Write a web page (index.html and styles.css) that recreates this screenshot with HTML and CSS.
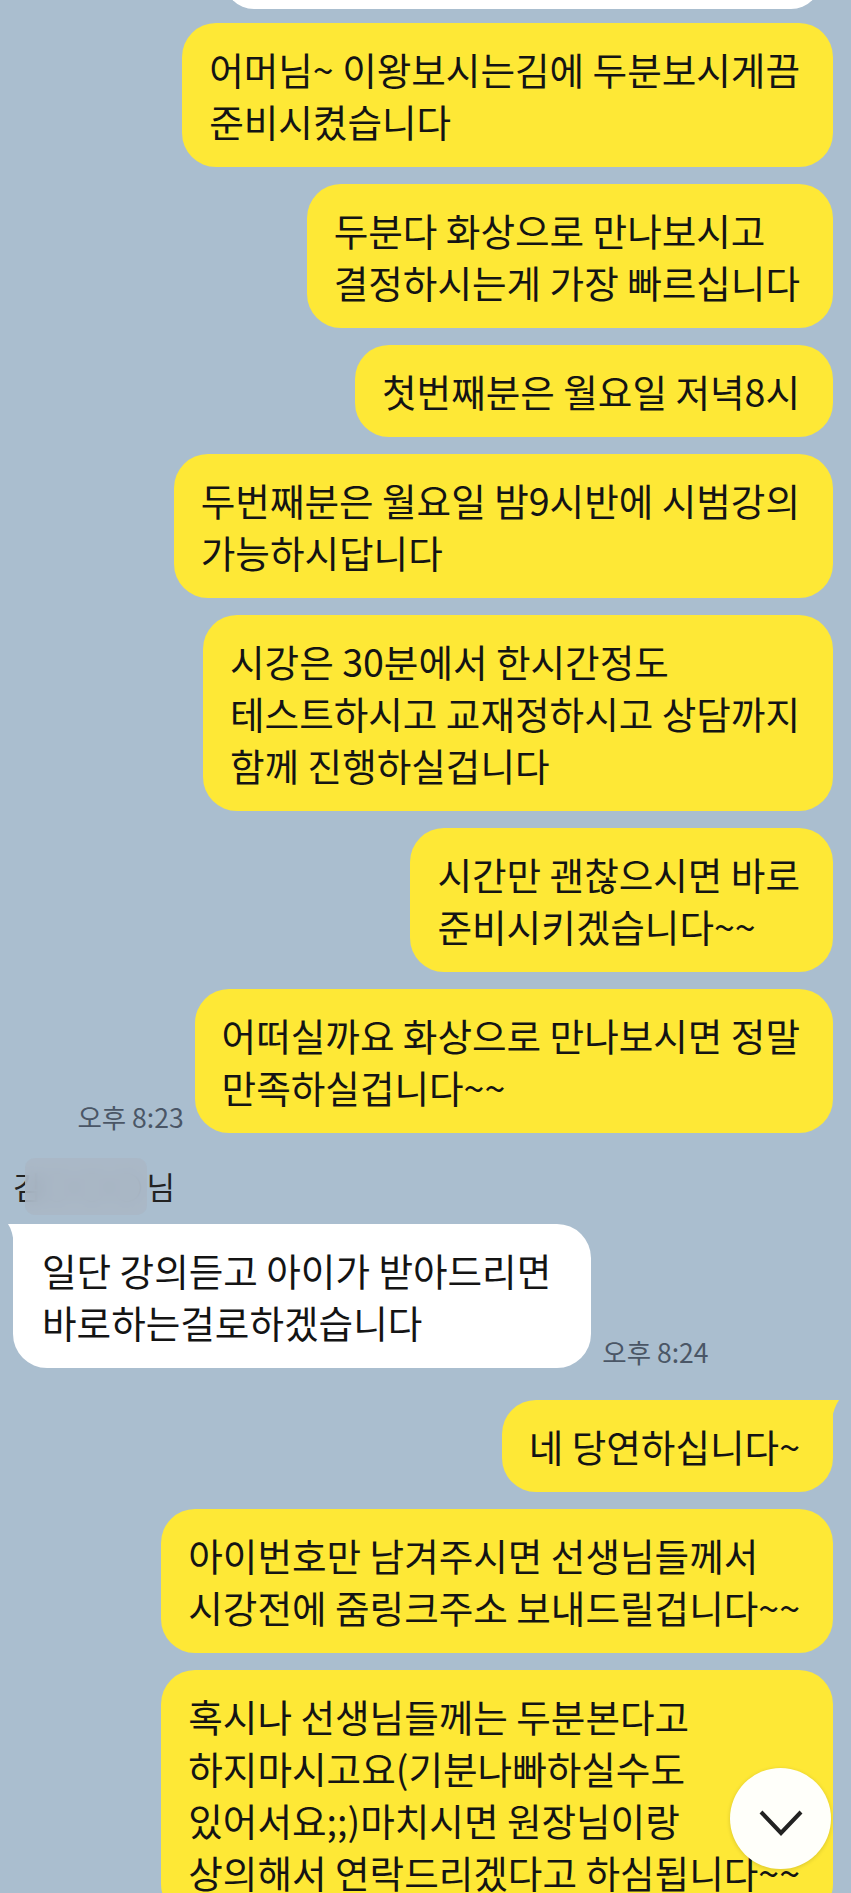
FILE: index.html
```html
<!DOCTYPE html>
<html>
<head lang="ko">
<meta charset="UTF-8">
<title>채팅</title>
<link rel="stylesheet" href="styles.css">
</head>
<body>
  <div class="chat">
    <div class="card-top"></div>

    <div class="group me">
      <div class="row"><div class="bubble">어머님~ 이왕보시는김에 두분보시게끔<br>준비시켰습니다</div></div>
      <div class="row"><div class="bubble">두분다 화상으로 만나보시고<br>결정하시는게 가장 빠르십니다</div></div>
      <div class="row"><div class="bubble">첫번째분은 월요일 저녁8시</div></div>
      <div class="row"><div class="bubble">두번째분은 월요일 밤9시반에 시범강의<br>가능하시답니다</div></div>
      <div class="row"><div class="bubble">시강은 30분에서 한시간정도<br>테스트하시고 교재정하시고 상담까지<br>함께 진행하실겁니다</div></div>
      <div class="row"><div class="bubble">시간만 괜찮으시면 바로<br>준비시키겠습니다~~</div></div>
      <div class="row">
        <span class="time">오후 8:23</span>
        <div class="bubble">어떠실까요 화상으로 만나보시면 정말<br>만족하실겁니다~~</div>
      </div>
    </div>

    <div class="group other">
      <div class="name">김<span class="masked">○○○</span>님<span class="blur"></span></div>
      <div class="row">
        <div class="bubble tail">일단 강의듣고 아이가 받아드리면<br>바로하는걸로하겠습니다</div>
        <span class="time">오후 8:24</span>
      </div>
    </div>

    <div class="group me">
      <div class="row"><div class="bubble tail">네 당연하십니다~</div></div>
      <div class="row"><div class="bubble">아이번호만 남겨주시면 선생님들께서<br>시강전에 줌링크주소 보내드릴겁니다~~</div></div>
      <div class="row"><div class="bubble">혹시나 선생님들께는 두분본다고<br>하지마시고요(기분나빠하실수도<br>있어서요;;)마치시면 원장님이랑<br>상의해서 연락드리겠다고 하심됩니다~~</div></div>
    </div>

    <button class="scroll-down" type="button">
      <svg width="46" height="28" viewBox="0 0 46 28">
        <polyline points="3,3 23,24 43,3" fill="none" stroke="#222" stroke-width="4"/>
      </svg>
    </button>
  </div>
</body>
</html>
```

FILE: styles.css
```css
html, body {
margin: 0;
padding: 0;
}
body {
background: #aabecf;
color: #141414;
font-family: "Noto Sans CJK KR", "Noto Sans", sans-serif;
}
.chat {
position: relative;
height: 1893px;
overflow: hidden;
}
.card-top {
height: 60px;
margin: -51px 30px 0 224px;
background: #fff;
border-radius: 0 0 30px 30px;
}
.group {
display: flex;
flex-direction: column;
gap: 17px;
}
.me {
padding: 0 18px 0 0;
margin-top: 14px;
}
.me + .other { margin-top: 35px; }
.other + .me { margin-top: 32px; }
.row {
display: flex;
align-items: flex-end;
gap: 11px;
}
.me .row { justify-content: flex-end; }
.bubble {
position: relative;
font-size: 37.6px;
line-height: 52px;
padding: 20px 33px 20px 27px;
border-radius: 34px;
background: #fee836;
white-space: nowrap;
}
.me .bubble.tail { border-top-right-radius: 4px; }
.me .bubble.tail::after {
content: "";
position: absolute;
top: 0;
right: -6px;
width: 14px;
height: 22px;
background: #fee836;
clip-path: path('M0 0 L14 0 Q9 7 6 22 L0 22 Z');
}
.time {
font-size: 26.5px;
line-height: 30px;
color: #4a5666;
padding-bottom: 1px;
white-space: nowrap;
}

/* other side */
.other {
padding-left: 13px;
gap: 20px;
}
.name {
position: relative;
font-size: 31px;
line-height: 36px;
color: #222;
}
.masked { letter-spacing: 4px; }
.blur {
position: absolute;
left: 12px;
top: -10px;
width: 122px;
height: 57px;
border-radius: 10px;
background: rgba(170, 183, 197, 0.85);
backdrop-filter: blur(8px);
}
.other .bubble {
background: #fff;
padding-left: 29px;
padding-right: 40px;
}
.other .bubble.tail { border-top-left-radius: 4px; }
.other .bubble.tail::after {
content: "";
position: absolute;
top: 0;
left: -5px;
width: 14px;
height: 22px;
background: #fff;
clip-path: path('M14 0 L0 0 Q5 7 6 22 L14 22 Z');
}

.scroll-down {
position: absolute;
right: 20px;
bottom: 24px;
width: 101px;
height: 101px;
border: none;
border-radius: 50%;
background: #fffffa;
box-shadow: 0 1px 4px rgba(0, 0, 0, 0.15);
display: flex;
align-items: center;
justify-content: center;
padding: 8px 0 0 0;
cursor: pointer;
}
```
